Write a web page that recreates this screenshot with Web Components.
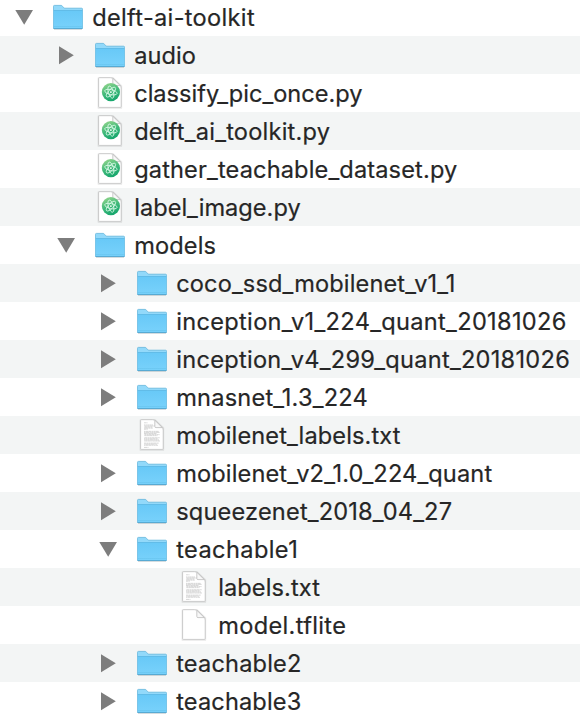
<!DOCTYPE html>
<html lang="en"><head><meta charset="utf-8"><title>delft-ai-toolkit</title>
<style>html,body{margin:0;background:#fff}body{width:580px;height:720px;overflow:hidden}</style></head>
<body>
<file-tree>
<file-row depth="0" kind="folder" state="open" extent="163.2">delft-ai-toolkit</file-row>
<file-row depth="1" kind="folder" state="closed" extent="61">audio</file-row>
<file-row depth="1" kind="python" extent="228.5">classify_pic_once.py</file-row>
<file-row depth="1" kind="python" extent="196">delft_ai_toolkit.py</file-row>
<file-row depth="1" kind="python" extent="323.3">gather_teachable_dataset.py</file-row>
<file-row depth="1" kind="python" extent="166.7">label_image.py</file-row>
<file-row depth="1" kind="folder" state="open" extent="81.8">models</file-row>
<file-row depth="2" kind="folder" state="closed" extent="278">coco_ssd_mobilenet_v1_1</file-row>
<file-row depth="2" kind="folder" state="closed" extent="390">inception_v1_224_quant_20181026</file-row>
<file-row depth="2" kind="folder" state="closed" extent="393.5">inception_v4_299_quant_20181026</file-row>
<file-row depth="2" kind="folder" state="closed" extent="190.8">mnasnet_1.3_224</file-row>
<file-row depth="2" kind="text" extent="225">mobilenet_labels.txt</file-row>
<file-row depth="2" kind="folder" state="closed" extent="316.7">mobilenet_v2_1.0_224_quant</file-row>
<file-row depth="2" kind="folder" state="closed" extent="276">squeezenet_2018_04_27</file-row>
<file-row depth="2" kind="folder" state="open" extent="120.5">teachable1</file-row>
<file-row depth="3" kind="text" extent="102.5">labels.txt</file-row>
<file-row depth="3" kind="blank" extent="127.5">model.tflite</file-row>
<file-row depth="2" kind="folder" state="closed" extent="124.3">teachable2</file-row>
<file-row depth="2" kind="folder" state="closed" extent="125">teachable3</file-row>
</file-tree>
<script>
class FileTree extends HTMLElement{
  constructor(){super();this.attachShadow({mode:'open'}).innerHTML=`<style>
  :host{display:flex;flex-direction:column;margin-top:-2px;width:580px;color:#262626;font:23.6px/38px Inter,"Liberation Sans",sans-serif}
  ::slotted(:nth-child(even)){background:#f3f5f5}</style><slot></slot>`}
}
class TreeArrow extends HTMLElement{
  connectedCallback(){
    const s=this.getAttribute('state');
    const p=s==='open'?'M15.3 12H33L24.2 26.8Z':s==='closed'?'M17 10L31.8 19L17 28Z':'';
    this.attachShadow({mode:'open'}).innerHTML=`<style>:host,svg{display:block}</style><svg width="53" height="38"><path d="${p}" transform="translate(0 ${s==='closed'?.2:0})" fill="#7d7d7d"/></svg>`;
  }
}
class FileIcon extends HTMLElement{
  connectedCallback(){
    const k=this.getAttribute('kind');let body;
    if(k==='folder'){
      body=`<defs><linearGradient id="f" x1="0" y1="0" x2="0" y2="1"><stop offset="0" stop-color="#68c9f7"/><stop offset="1" stop-color="#78d1fb"/></linearGradient></defs>
      <path d="M1 31.3H29" stroke="#000" stroke-opacity=".16" stroke-width="1"/>
      <path d="M.4 30V8.6Q.4 7.4 1.5 7.4H8.3C9.7 7.4 10 10.2 11.8 10.2H28.5Q29.6 10.2 29.6 11.3V30Q29.6 30.6 29 30.6H1Q.4 30.6 .4 30Z" fill="#92d9fa" stroke="#62b5dc" stroke-width=".8"/>
      <path d="M.8 12.7H29.2V30.2H.8Z" fill="url(#f)"/><path d="M.8 12.5H29.2" stroke="#5cb9e5" stroke-width=".9"/>
      <path d="M.8 28.6H29.2" stroke="#62bfe9" stroke-width=".5"/><path d="M.6 30.5H29.4" stroke="#54a7d0" stroke-width=".9"/>`;
    }else{
      body=`<path d="M3.5 4.2H18.2L26.3 12V33.9H3.5Z" fill="none" stroke="#000" stroke-opacity=".09" stroke-width="1.8" stroke-linejoin="round"/>
      <path d="M4.4 3.7H15.5Q17.8 3.8 19.4 5.4L24.5 10.5Q26.2 12.2 26.2 14V32.5Q26.2 33.4 25.3 33.4H4.4Q3.6 33.4 3.6 32.5V4.5Q3.6 3.7 4.4 3.7Z" fill="#fff" stroke="#bdbdbd" stroke-width=".75"/>
      <path d="M17.8 4.3V10.4Q17.8 11.6 19 11.6H25.3Z" fill="#f8f8f8" stroke="#bdbdbd" stroke-width=".8"/>`;
      if(k==='python')body+=`<defs><linearGradient id="g" x1=".3" y1="0" x2=".7" y2="1"><stop stop-color="#8ed48b"/><stop offset=".5" stop-color="#40b97a"/><stop offset="1" stop-color="#11a46b"/></linearGradient></defs>
      <circle cx="15.9" cy="18.1" r="9.1" fill="url(#g)"/>
      <g fill="none" stroke="#dcfbea" stroke-width=".9" stroke-opacity=".9"><ellipse cx="15.9" cy="18.1" rx="2.5" ry="6.3" transform="rotate(-17 15.9 18.1)"/><ellipse cx="15.9" cy="18.1" rx="2.5" ry="6.3" transform="rotate(43 15.9 18.1)"/><ellipse cx="15.9" cy="18.1" rx="2.5" ry="6.3" transform="rotate(103 15.9 18.1)"/></g><circle cx="15.9" cy="18.1" r=".9" fill="#fff"/>`;
      if(k==='text'){
        const w=[3.5,0,9,10.5,8.5,9,4,0,15,16,12.5,15.5,13.5,0,16,14,15,16,0,15,13,14,0,4.5];
        body+='<g stroke="#8c8c8c" stroke-opacity=".62" stroke-width=".55" stroke-dasharray="2.3 .3 3.1 .4 1.4 .35 1.9 .3">'+w.map((n,i)=>n?`<path d="M7 ${6.8+i*1.07}h${n}" stroke-dashoffset="${i*2.3}"/>`:'').join('')+'</g>';
      }
    }
    this.attachShadow({mode:'open'}).innerHTML=`<style>:host,svg{display:block}</style><svg width="30" height="38">${body}</svg>`;
  }
}
class FileRow extends HTMLElement{
  connectedCallback(){
    const a=n=>this.getAttribute(n)||'';
    this.attachShadow({mode:'open'}).innerHTML=`<style>
    :host{display:grid;grid-template-columns:53px 30px 1fr;box-sizing:border-box;height:38px;padding-left:${a('depth')*42}px;white-space:nowrap}
    .name{padding:1px 0 0 9.2px;font-kerning:normal;font-feature-settings:"calt" 0;-webkit-text-stroke:.2px #262626}</style>
    <tree-arrow state="${a('state')}"></tree-arrow><file-icon kind="${a('kind')}"></file-icon><span class="name"><slot></slot></span>`;
    // Tracks the name so that its last glyph ends at the given extent.
    const c=document.createElement('canvas').getContext('2d');
    c.font='23.6px Inter, "Liberation Sans", sans-serif';
    const t=this.textContent;
    const s=(+a('extent')-.5-c.measureText(t).actualBoundingBoxRight)/(t.length-1);
    this.shadowRoot.querySelector('.name').style.letterSpacing=s.toFixed(3)+'px';
  }
}
customElements.define('tree-arrow',TreeArrow);
customElements.define('file-icon',FileIcon);
customElements.define('file-row',FileRow);
customElements.define('file-tree',FileTree);
</script></body></html>
